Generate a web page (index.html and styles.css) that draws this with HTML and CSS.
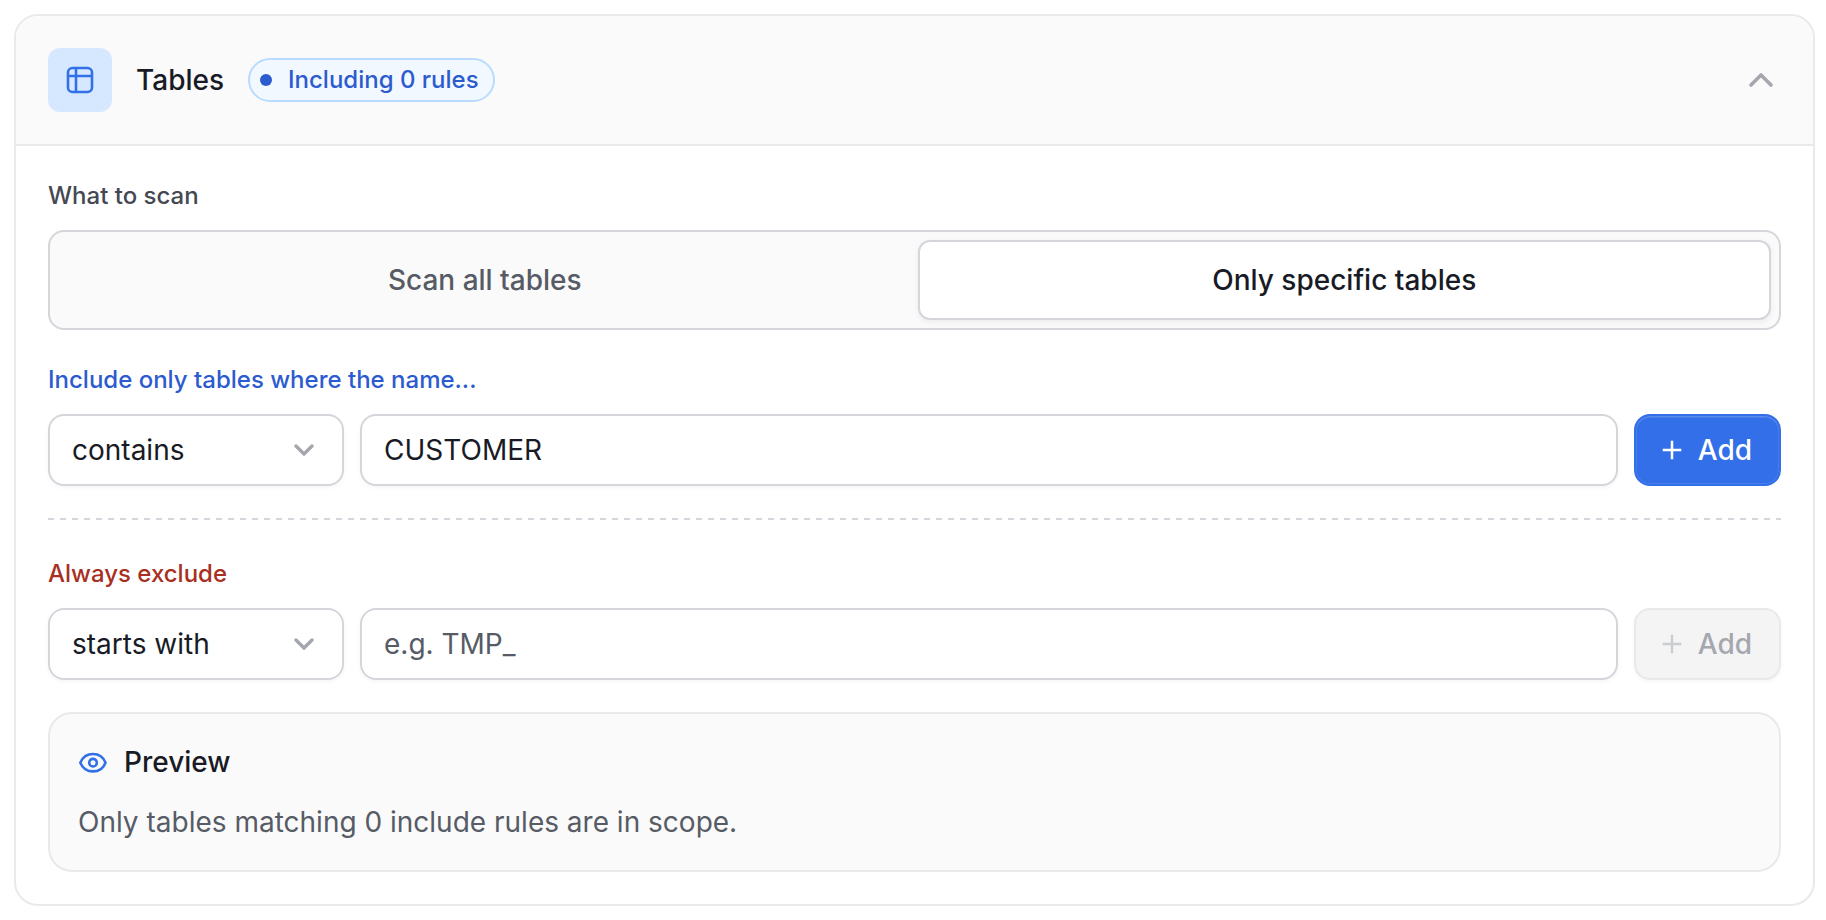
FILE: index.html
```html
<!DOCTYPE html>
<html lang="en">
<head>
  <meta charset="UTF-8">
  <meta name="viewport" content="width=device-width, initial-scale=1.0">
  <title>Tables</title>
  <link rel="stylesheet" href="styles.css">
</head>
<body>
  <section class="card">
    <header class="card-header">
      <span class="card-icon">
        <svg width="32" height="32" viewBox="0 0 32 32" fill="none" stroke="currentColor" stroke-width="2.6">
          <rect x="4" y="4" width="24" height="24" rx="4.5"/>
          <path d="M4 12h24M12 4v24"/>
        </svg>
      </span>
      <h2>Tables</h2>
      <span class="badge"><span class="dot"></span>Including 0 rules</span>
      <button type="button" class="toggle" aria-label="Collapse" aria-expanded="true">
        <svg width="32" height="32" viewBox="0 0 32 32" fill="none" stroke="currentColor" stroke-width="3.6" stroke-linecap="round" stroke-linejoin="round">
          <path d="M6 21l10-10 10 10"/>
        </svg>
      </button>
    </header>

    <div class="card-body">
      <div class="label" id="scanLabel">What to scan</div>
      <div class="segmented" role="group" aria-labelledby="scanLabel">
        <button type="button" aria-pressed="false">Scan all tables</button>
        <button type="button" class="active" aria-pressed="true">Only specific tables</button>
      </div>

      <label class="label include" for="includeValue">Include only tables where the name...</label>
      <div class="rule">
        <div class="select">
          <select id="includeOp" aria-label="Include condition">
            <option>contains</option>
            <option>starts with</option>
          </select>
          <svg width="20" height="12" viewBox="0 0 20 12" fill="none" stroke="currentColor" stroke-width="3.4" stroke-linecap="round" stroke-linejoin="round">
            <path d="M2 2l8 8 8-8"/>
          </svg>
        </div>
        <input type="text" id="includeValue" value="CUSTOMER">
        <button type="button" class="add">
          <svg width="20" height="20" viewBox="0 0 20 20" fill="none" stroke="currentColor" stroke-width="2.5">
            <path d="M10 .7v18.600M.7 10h18.600"/>
          </svg>
          Add
        </button>
      </div>

      <hr>

      <label class="label exclude" for="excludeValue">Always exclude</label>
      <div class="rule">
        <div class="select">
          <select id="excludeOp" aria-label="Exclude condition">
            <option>starts with</option>
            <option>contains</option>
          </select>
          <svg width="20" height="12" viewBox="0 0 20 12" fill="none" stroke="currentColor" stroke-width="3.4" stroke-linecap="round" stroke-linejoin="round">
            <path d="M2 2l8 8 8-8"/>
          </svg>
        </div>
        <input type="text" id="excludeValue" placeholder="e.g. TMP_">
        <button type="button" class="add" disabled>
          <svg width="20" height="20" viewBox="0 0 20 20" fill="none" stroke="currentColor" stroke-width="2.5">
            <path d="M10 .7v18.600M.7 10h18.600"/>
          </svg>
          Add
        </button>
      </div>

      <div class="preview">
        <h3>
          <svg width="30" height="30" viewBox="0 0 30 30" fill="none" stroke="currentColor" stroke-width="2.6" stroke-linejoin="round">
            <path d="M2.300 15.700C4.500 10.500 9 7 15 7s10.500 3.500 12.500 8.700c-2 5.200-6.500 8.700-12.500 8.700S4.500 20.900 2.300 15.700z"/>
            <circle cx="15" cy="15.700" r="3.800"/>
          </svg>
          Preview
        </h3>
        <p>Only tables matching 0 include rules are in scope.</p>
      </div>
    </div>
  </section>
</body>
</html>
```

FILE: styles.css
```css
* {
  box-sizing: border-box;
}
body {
  margin: 0;
  padding: 14px 11px 14px 14px;
  background: #fff;
  color: #181b25;
  font-family: Inter, sans-serif;
  font-size: 28px;
  line-height: 40px;
}
h2, h3, p {
  margin: 0;
  font-size: 28px;
  font-weight: 500;
}
button, input, select {
  font: inherit;
  color: inherit;
}
svg {
  display: block;
  flex: none;
}

.card {
  border: 2px solid #e9e9ea;
  border-radius: 24px;
  overflow: hidden;
}
.card-header {
  display: flex;
  align-items: center;
  gap: 24px;
  padding: 32px;
  background: #fafafa;
  border-bottom: 2px solid #e9e9ea;
}
.card-icon {
  display: flex;
  align-items: center;
  justify-content: center;
  width: 64px;
  height: 64px;
  border-radius: 12px;
  background: #d6e8ff;
  color: #336fe8;
}
.badge {
  display: flex;
  align-items: center;
  gap: 16px;
  height: 44px;
  padding: 0 14px 0 10px;
  border: 2px solid #b8dbff;
  border-radius: 22px;
  background: #f1f8ff;
  color: #2c5bd0;
  font-size: 24px;
  font-weight: 500;
}
.dot {
  width: 12px;
  height: 12px;
  border-radius: 50%;
  background: currentColor;
}
.toggle {
  margin-left: auto;
  padding: 4px;
  border: none;
  background: none;
  color: #a5a7af;
  cursor: pointer;
}

.card-body {
  padding: 32px;
}
.label {
  display: block;
  margin-bottom: 16px;
  color: #444852;
  font-size: 24px;
  font-weight: 500;
  line-height: 36px;
}
.include {
  color: #2c5bd0;
}
.exclude {
  color: #a82f22;
}

.segmented {
  display: grid;
  grid-template-columns: 1fr 1fr;
  gap: 6px;
  margin-bottom: 32px;
  padding: 8px;
  border: 2px solid #d5d6db;
  border-radius: 16px;
  background: #fafafa;
}
.segmented button {
  height: 80px;
  border: 2px solid transparent;
  border-radius: 12px;
  background: none;
  color: #575b65;
  font-weight: 500;
  cursor: pointer;
}
.segmented .active {
  border-color: #d5d6db;
  background: #fff;
  color: #181b25;
  box-shadow: 0 2px 6px rgba(0,0,0,0.06);
}

.rule {
  display: flex;
  gap: 16px;
}
.select {
  display: grid;
  align-items: center;
  flex: none;
  width: 296px;
}
.select select, .select svg {
  grid-area: 1 / 1;
}
.select svg {
  justify-self: end;
  margin-right: 30px;
  color: #a5a7af;
  pointer-events: none;
}
select, input {
  height: 72px;
  padding: 0 22px;
  border: 2px solid #d5d6db;
  border-radius: 16px;
  background: #fff;
  box-shadow: 0 2px 4px rgba(0,0,0,0.04);
}
select {
  width: 100%;
  appearance: none;
}
input {
  flex: 1;
  min-width: 0;
}
input::placeholder {
  color: #575b65;
  opacity: 1;
}
.add {
  display: flex;
  align-items: center;
  gap: 16px;
  height: 72px;
  padding: 0 27px 0 26px;
  border: 2px solid #336fe8;
  border-radius: 16px;
  background: #336fe8;
  color: #fff;
  font-weight: 500;
  box-shadow: inset 0 0 0 1px rgba(255,255,255,0.1), inset 0 2px 0 rgba(255,255,255,0.1);
  cursor: pointer;
}
.add:disabled {
  border-color: #e9e9ea;
  background: #f4f4f4;
  color: #a5a7af;
  box-shadow: 0 2px 4px rgba(0,0,0,0.04);
  cursor: default;
}
.add:disabled svg {
  opacity: 0.5;
}

hr {
  height: 2px;
  margin: 32px 0 36px;
  border: none;
  background: repeating-linear-gradient(to right, #d5d6db 0 6px, transparent 6px 12px);
}

.preview {
  margin-top: 32px;
  padding: 28px;
  border: 2px solid #e9e9ea;
  border-radius: 24px;
  background: #fafafa;
}
.preview h3 {
  display: flex;
  align-items: center;
  gap: 16px;
  margin-bottom: 20px;
}
.preview svg {
  color: #336fe8;
}
.preview p {
  color: #575b65;
  font-weight: 400;
}
```
